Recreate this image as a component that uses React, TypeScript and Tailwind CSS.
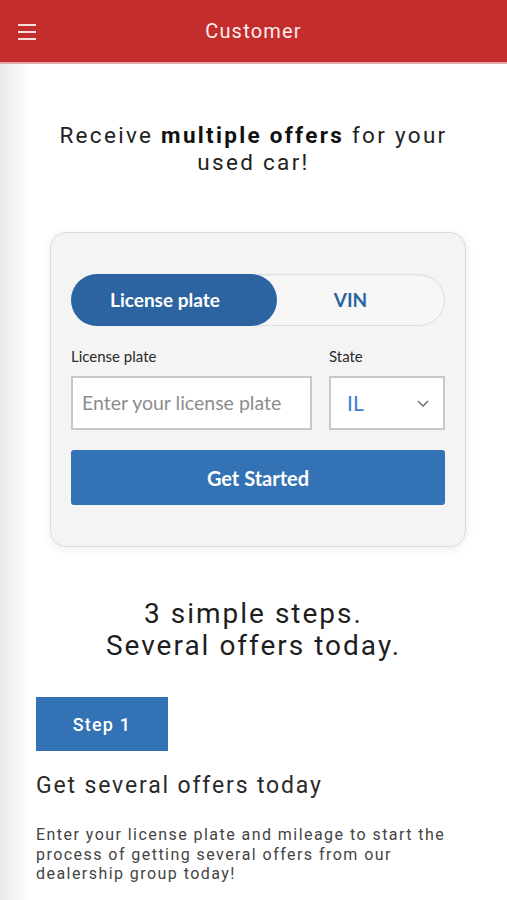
import React from "react";

export default function App() {
  const din = { fontFamily: "Roboto, 'Noto Sans', sans-serif" };
  return (
    <div className="w-[507px] min-h-[900px] bg-white overflow-hidden">
      <header className="h-[64px] bg-[#c32d2b] border-b-2 border-[#e9a9a6] flex items-center relative">
        <div className="absolute left-[18px] top-[24px] flex flex-col gap-[5px]">
          <span className="block w-[18px] h-[2px] bg-[#f6dede]" />
          <span className="block w-[18px] h-[2px] bg-[#f6dede]" />
          <span className="block w-[18px] h-[2px] bg-[#f6dede]" />
        </div>
        <h1 className="w-full text-center text-[#fbeeee] text-[20px] tracking-[1.2px] font-normal" style={din}>
          Customer
        </h1>
      </header>
      <main className="bg-[linear-gradient(to_right,#eaeaea,#ffffff_30px)]">
        <section className="pt-[58px] pb-[56px]">
          <p className="text-center text-[22.5px] leading-[27px] text-[#222] tracking-[2.3px]" style={din}>
            Receive <b className="font-bold text-[#111]">multiple offers</b> for your
            <br />
            used car!
          </p>
        </section>
        <section className="px-[50px] pb-[38px]">
          <div
            className="w-[416px] rounded-[16px] border border-[#dcdcdc] bg-[#f4f4f4] shadow-[0_2px_10px_rgba(0,0,0,0.08)] px-[20px] pt-[41px] pb-[41px]"
            style={{ fontFamily: "Lato, 'Noto Sans', sans-serif" }}
          >
            <div className="flex h-[52px] rounded-full border border-[#dedede] bg-[#f7f7f7] shadow-[inset_0_1px_2px_rgba(0,0,0,0.05)]">
              <div className="w-[206px] rounded-full bg-[#2b64a1] flex items-center justify-center pr-[18px] text-white text-[19px] font-bold -ml-px -my-px">
                License plate
              </div>
              <div className="flex-1 flex items-center justify-center pr-[20px] text-[#2b64a1] text-[19px] font-bold">
                VIN
              </div>
            </div>
            <div className="flex gap-[17px] mt-[20px]">
              <div className="w-[241px]">
                <div className="text-[15px] text-[#2a2a2a] leading-[20px] mb-[10px]">License plate</div>
                <div className="h-[54px] border-2 border-[#c8c8c8] bg-white flex items-center pl-[9px] text-[19.5px] text-[#8d8d8d]">
                  Enter your license plate
                </div>
              </div>
              <div className="flex-1">
                <div className="text-[15px] text-[#2a2a2a] leading-[20px] mb-[10px]">State</div>
                <div className="h-[54px] border-2 border-[#c8c8c8] bg-white flex items-center justify-between pl-[16px] pr-[13px]">
                  <span className="text-[21px] text-[#3b7cd0]">IL</span>
                  <svg width="14" height="9" viewBox="0 0 14 9" fill="none">
                    <path d="M2 2l5 5 5-5" stroke="#777" strokeWidth="1.6" />
                  </svg>
                </div>
              </div>
            </div>
            <button className="mt-[20px] w-full h-[55px] rounded-[3px] bg-[#3372b5] text-white text-[20px] font-bold">
              Get Started
            </button>
          </div>
        </section>
        <section className="px-[36px] pb-[40px]" style={din}>
          <h2 className="text-center text-[28px] leading-[32px] text-[#1e1e1e] tracking-[2px] pt-[13px]">
            3 simple steps.
            <br />
            Several offers today.
          </h2>
          <div className="mt-[35px] w-[132px] h-[54px] bg-[#3372b5] flex items-center justify-center text-white text-[18px] font-medium tracking-[1.2px]">
            Step 1
          </div>
          <h3 className="mt-[20px] text-[23px] leading-[30px] text-[#2a2a2a] tracking-[1.85px]">Get several offers today</h3>
          <p className="mt-[24px] text-[16px] leading-[19.5px] text-[#444] tracking-[1.45px]">
            Enter your license plate and mileage to start the process of getting several offers from our dealership group today!
          </p>
        </section>
      </main>
    </div>
  );
}
